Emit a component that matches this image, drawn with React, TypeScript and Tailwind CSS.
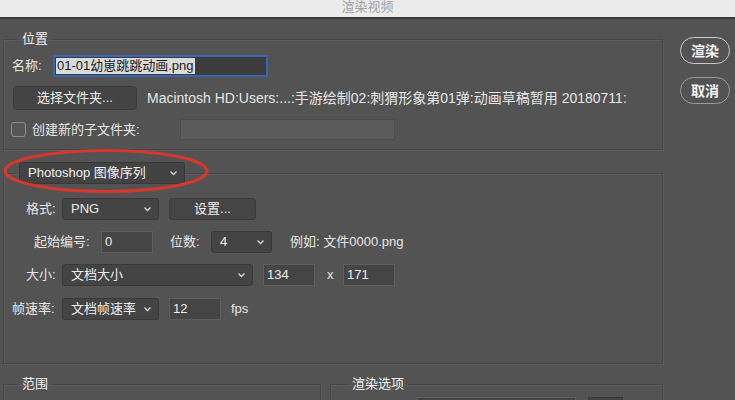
import React from "react";

const font = { fontFamily: '"Liberation Sans", "Noto Sans CJK SC", sans-serif' };

function Chevron() {
  return (
    <svg width="9" height="6" viewBox="0 0 9 6" className="shrink-0">
      <path d="M1.5 1.5 L4.5 4.5 L7.5 1.5" fill="none" stroke="#d8d8d8" strokeWidth="1.3" />
    </svg>
  );
}

function Select({ w, text }: { w: string; text: string }) {
  return (
    <div className={`${w} h-[22px] flex items-center justify-between pl-[8px] pr-[6px] bg-[#444444] border border-[#3a3a3a] rounded-[3px] text-[13px] leading-[16px] text-[#ececec]`}>
      <span>{text}</span>
      <Chevron />
    </div>
  );
}

function Input({ text }: { text: string }) {
  return (
    <div className="w-[52px] h-[22px] flex items-center pl-[3px] bg-[#454545] border border-[#5e5e5e] text-[13px] leading-[16px] text-[#ececec]">
      {text}
    </div>
  );
}

const legendCls = "text-[13px] leading-[16px] text-[#f0f0f0]";
const fsCls = "border border-[#474747] shadow-[1px_1px_0_#5c5c5c,inset_1px_1px_0_#5c5c5c]";

export default function App() {
  return (
    <div className="w-[735px] h-[400px] overflow-hidden bg-[#535353] relative" style={font}>
      <div className="h-[19px] bg-[#ebebeb] border-b-2 border-[#3a3a3a] flex justify-center">
        <span className="text-[13px] leading-[15px] text-[#a3a3a3] -mt-[1px]">渲染视频</span>
      </div>
      <div className="flex">
        <div className="w-[663px] pl-[3px] flex flex-col">
          {/* 位置 */}
          <fieldset className={`mt-[12px] h-[119px] ${fsCls}`}>
            <legend className={`ml-[14px] px-[4px] ${legendCls}`}>位置</legend>
            <div className="mt-[8px] flex items-center">
              <span className="ml-[8px] w-[41px] text-[13px] leading-[16px] text-[#e6e6e6]">名称:</span>
              <div className="w-[215px] h-[22px] flex items-center pl-[1px] bg-[#3c3c3c] border-2 border-[#3767b4]">
                <span className="bg-[#dadada] text-[#1c1c1c] text-[13px] leading-[16px] px-[1px]">01-01幼崽跳跳动画.png</span>
              </div>
            </div>
            <div className="mt-[9px] flex items-center">
              <div className="ml-[9px] w-[124px] h-[24px] flex items-center justify-center bg-[#444444] border border-[#3c3c3c] rounded-[4px] text-[13px] leading-[16px] text-[#efefef]">
                选择文件夹...
              </div>
              <span className="ml-[10px] text-[14px] leading-[16px] text-[#e6e6e6] whitespace-nowrap">
                Macintosh HD:Users:...:手游绘制02:刺猬形象第01弹:动画草稿暂用 20180711:
              </span>
            </div>
            <div className="mt-[9px] flex items-center">
              <div className="ml-[7px] w-[15px] h-[15px] rounded-[3px] border border-[#8c8c8c] bg-[#565656]" />
              <span className="ml-[6px] w-[148px] text-[13px] leading-[16px] text-[#e6e6e6]">创建新的子文件夹:</span>
              <div className="w-[215px] h-[21px] bg-[#5a5a5a] border border-[#4c4c4c]" />
            </div>
          </fieldset>

          {/* 图像序列 */}
          <fieldset className={`mt-[12px] h-[202px] ${fsCls}`}>
            <legend className="ml-[13px] px-[2px]">
              <div className="w-[166px] h-[22px] flex items-center justify-between pl-[8px] pr-[6px] bg-[#434343] border border-[#383838] rounded-[3px] text-[13px] leading-[16px] text-[#f0f0f0]">
                <span>Photoshop 图像序列</span>
                <Chevron />
              </div>
            </legend>
            <div className="mt-[14px] flex items-center text-[13px] leading-[16px] text-[#e6e6e6]">
              <span className="ml-[22px] w-[36px]">格式:</span>
              <Select w="w-[97px]" text="PNG" />
              <div className="ml-[10px] w-[87px] h-[22px] flex items-center justify-center bg-[#454545] border border-[#3c3c3c] rounded-[3px] text-[#efefef]">
                设置...
              </div>
            </div>
            <div className="mt-[11px] flex items-center text-[13px] leading-[16px] text-[#e6e6e6]">
              <span className="ml-[30px] w-[67px]">起始编号:</span>
              <Input text="0" />
              <span className="ml-[17px] w-[41px]">位数:</span>
              <Select w="w-[61px]" text="4" />
              <span className="ml-[18px]">例如: 文件0000.png</span>
            </div>
            <div className="mt-[11px] flex items-center text-[13px] leading-[16px] text-[#e6e6e6]">
              <span className="ml-[22px] w-[36px]">大小:</span>
              <Select w="w-[191px]" text="文档大小" />
              <div className="ml-[10px]">
                <Input text="134" />
              </div>
              <span className="ml-[12px] w-[16px]">x</span>
              <Input text="171" />
            </div>
            <div className="mt-[12px] flex items-center text-[13px] leading-[16px] text-[#e6e6e6]">
              <span className="ml-[8px] w-[50px]">帧速率:</span>
              <Select w="w-[97px]" text="文档帧速率" />
              <div className="ml-[10px]">
                <Input text="12" />
              </div>
              <span className="ml-[10px]">fps</span>
            </div>
          </fieldset>

          {/* bottom groups */}
          <div className="mt-[12px] flex">
            <fieldset className={`w-[318px] h-[60px] ${fsCls}`}>
              <legend className={`ml-[14px] px-[4px] ${legendCls}`}>范围</legend>
            </fieldset>
            <fieldset className={`ml-[9px] w-[333px] h-[60px] ${fsCls}`}>
              <legend className={`ml-[17px] px-[4px] ${legendCls}`}>渲染选项</legend>
              <div className="mt-[5px] flex">
                <div className="ml-[86px] w-[159px] h-[22px] bg-[#454545] border border-[#5e5e5e]" />
                <div className="ml-[12px] w-[35px] h-[22px] bg-[#444444] border border-[#3a3a3a]" />
              </div>
            </fieldset>
          </div>
        </div>

        <div className="ml-[17px] mt-[18px] flex flex-col">
          <div className="w-[50px] h-[27px] rounded-full border-[1.5px] border-[#cacaca] flex items-center justify-center text-[14px] leading-[16px] font-bold text-[#f2f2f2]">
            渲染
          </div>
          <div className="mt-[13px] w-[50px] h-[27px] rounded-full border-[1.5px] border-[#9b9b9b] flex items-center justify-center text-[14px] leading-[16px] font-bold text-[#f2f2f2]">
            取消
          </div>
        </div>
      </div>

      <svg className="absolute left-[2px] top-[148px]" width="208" height="46" viewBox="0 0 208 46">
        <ellipse cx="104" cy="23" rx="101" ry="20.5" fill="none" stroke="#d8372b" strokeWidth="3" />
      </svg>
    </div>
  );
}
